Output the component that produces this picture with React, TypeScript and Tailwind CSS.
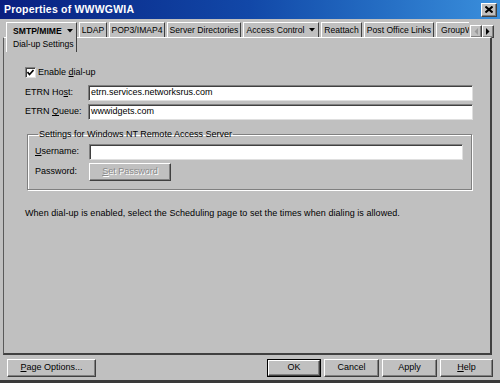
import React from 'react';

const raised =
  'border border-t-white border-l-white border-r-[#404040] border-b-[#404040] shadow-[inset_-1px_-1px_0_#808080]';
const sunken =
  'bg-white border border-t-[#808080] border-l-[#808080] border-r-[#dfdfdf] border-b-[#dfdfdf] shadow-[inset_1px_1px_0_#404040]';

const Tab: React.FC<{ label: string; w: string; children?: React.ReactNode }> = ({ label, w, children }) => (
  <div
    className={`${w} h-[15px] shrink-0 flex items-center justify-center whitespace-nowrap border-t border-l border-t-white border-l-white border-r border-r-[#404040] mr-[2px]`}
  >
    {label}
    {children}
  </div>
);

const Button: React.FC<{ w: string; children: React.ReactNode; def?: boolean }> = ({ w, children, def }) => (
  <div className={`${w} h-[18px] shrink-0 ${def ? 'border border-black p-0' : ''}`}>
    <div className={`h-full w-full flex items-center justify-center bg-[#c0c0c0] ${raised}`}>{children}</div>
  </div>
);

const App: React.FC = () => {
  return (
    <div className="w-[500px] h-[383px] bg-[#c0c0c0] flex flex-col overflow-hidden text-[9px] text-black font-['Liberation_Sans',Arial,sans-serif] border-b-[3px] border-b-[#3a3a3a]">
      {/* title bar */}
      <div className="h-[19px] shrink-0 flex items-center justify-between pl-[4px] pr-[3px] bg-gradient-to-r from-[#0a1f80] via-[#1248a8] to-[#3a8fdc]">
        <span className="text-white font-bold text-[10.5px] tracking-[0.2px]">Properties of WWWGWIA</span>
        <div className={`w-[16px] h-[14px] bg-[#c0c0c0] flex items-center justify-center ${raised}`}>
          <svg width="8" height="7" viewBox="0 0 8 7">
            <path d="M0.5 0.5 L7.5 6.5 M7.5 0.5 L0.5 6.5" stroke="#000" strokeWidth="2" />
          </svg>
        </div>
      </div>

      {/* tab row */}
      <div className="mt-[3px] h-[15px] shrink-0 flex items-start pl-[6px] pr-[7px] text-[8.6px]">
        <div className="relative z-10 w-[71px] h-[30px] mb-[-15px] mr-[2px] shrink-0 bg-[#c0c0c0] border-t border-l border-t-white border-l-white border-r border-r-[#404040] flex flex-col pl-[6px] pt-[2px] whitespace-nowrap">
          <div className="flex items-center h-[12px] font-bold gap-[5px]">
            SMTP/MIME
            <svg width="6" height="4" viewBox="0 0 6 4">
              <path d="M0 0 H6 L3 3.5 Z" fill="#000" />
            </svg>
          </div>
          <div className="mt-[1px] leading-[12px]">Dial-up Settings</div>
        </div>
        <Tab label="LDAP" w="w-[28px]" />
        <Tab label="POP3/IMAP4" w="w-[56px]" />
        <Tab label="Server Directories" w="w-[74px]" />
        <Tab label="Access Control" w="w-[76px]">
          <svg className="ml-[5px]" width="6" height="4" viewBox="0 0 6 4">
            <path d="M0 0 H6 L3 3.5 Z" fill="#000" />
          </svg>
        </Tab>
        <Tab label="Reattach" w="w-[41px]" />
        <Tab label="Post Office Links" w="w-[70px]" />
        <div className="w-[33px] h-[15px] shrink-0 overflow-hidden whitespace-nowrap border-t border-l border-t-white border-l-white pl-[4px] flex items-center">
          GroupWise
        </div>
        <div className="flex mt-[3px] ml-[1px]">
          <div className={`w-[12px] h-[13px] bg-[#c0c0c0] flex items-center justify-center ${raised}`}>
            <svg width="4" height="7" viewBox="0 0 4 7">
              <path d="M4 0 V7 L0.5 3.5 Z" fill="#9a9a9a" />
            </svg>
          </div>
          <div className={`w-[12px] h-[13px] bg-[#c0c0c0] flex items-center justify-center ${raised}`}>
            <svg width="4" height="7" viewBox="0 0 4 7">
              <path d="M0 0 V7 L3.5 3.5 Z" fill="#000" />
            </svg>
          </div>
        </div>
      </div>

      {/* panel */}
      <div className="flex-1 ml-[3px] mr-[8px] border-t border-t-white border-l border-l-[#5a5a5a] border-r-2 border-r-[#404040] border-b-2 border-b-[#404040] flex flex-col pl-[21px] pr-[17px]">
        <div className="mt-[28px] h-[13px] flex items-center">
          <div className={`w-[11px] h-[11px] flex items-center justify-center ${sunken}`}>
            <svg width="7" height="7" viewBox="0 0 7 7">
              <path d="M0.5 3 L2.5 5.5 L6.5 1" stroke="#000" strokeWidth="1.6" fill="none" />
            </svg>
          </div>
          <span className="ml-[2px]">
            Enable <span className="underline">d</span>ial-up
          </span>
        </div>

        <div className="mt-[6px] flex items-center h-[16px]">
          <span className="w-[63px] shrink-0">
            ETRN Ho<span className="underline">s</span>t:
          </span>
          <div className={`flex-1 h-[16px] flex items-center pl-[2px] ${sunken}`}>etrn.services.networksrus.com</div>
        </div>
        <div className="mt-[3px] flex items-center h-[16px]">
          <span className="w-[63px] shrink-0">
            ETRN <span className="underline">Q</span>ueue:
          </span>
          <div className={`flex-1 h-[16px] flex items-center pl-[2px] ${sunken}`}>wwwidgets.com</div>
        </div>

        <fieldset className="mt-[8px] ml-[2px] mr-[1px] border border-[#808080] shadow-[inset_1px_1px_0_#ffffff,1px_1px_0_#ffffff] pl-[7px] pr-[8px] pb-[8px]">
          <legend className="ml-[3px] px-[1px] leading-[13px]">Settings for Windows NT Remote Access Server</legend>
          <div className="mt-[3px] flex items-center h-[16px]">
            <span className="w-[54px] shrink-0">
              <span className="underline">U</span>sername:
            </span>
            <div className={`flex-1 h-[16px] ${sunken}`} />
          </div>
          <div className="mt-[3px] flex items-center h-[18px]">
            <span className="w-[54px] shrink-0">Password:</span>
            <div className={`w-[82px] h-[18px] flex items-center justify-center bg-[#c0c0c0] ${raised} text-[#8a8a8a] [text-shadow:1px_1px_0_#ffffff]`}>
              <span>
                <span className="underline">S</span>et Password
              </span>
            </div>
          </div>
        </fieldset>

        <p className="mt-[17px] leading-[13px] tracking-[0.05px]">
          When dial-up is enabled, select the Scheduling page to set the times when dialing is allowed.
        </p>
      </div>

      {/* bottom buttons */}
      <div className="h-[25px] shrink-0 flex items-start pt-[4px] pl-[7px] pr-[7px]">
        <Button w="w-[89px]">
          <span>
            <span className="underline">P</span>age Options...
          </span>
        </Button>
        <div className="flex-1" />
        <div className="flex gap-[3px]">
          <Button w="w-[54px]" def>
            OK
          </Button>
          <Button w="w-[55px]">Cancel</Button>
          <Button w="w-[55px]">Apply</Button>
          <Button w="w-[53px]">
            <span>
              <span className="underline">H</span>elp
            </span>
          </Button>
        </div>
      </div>
    </div>
  );
};

export default App;
